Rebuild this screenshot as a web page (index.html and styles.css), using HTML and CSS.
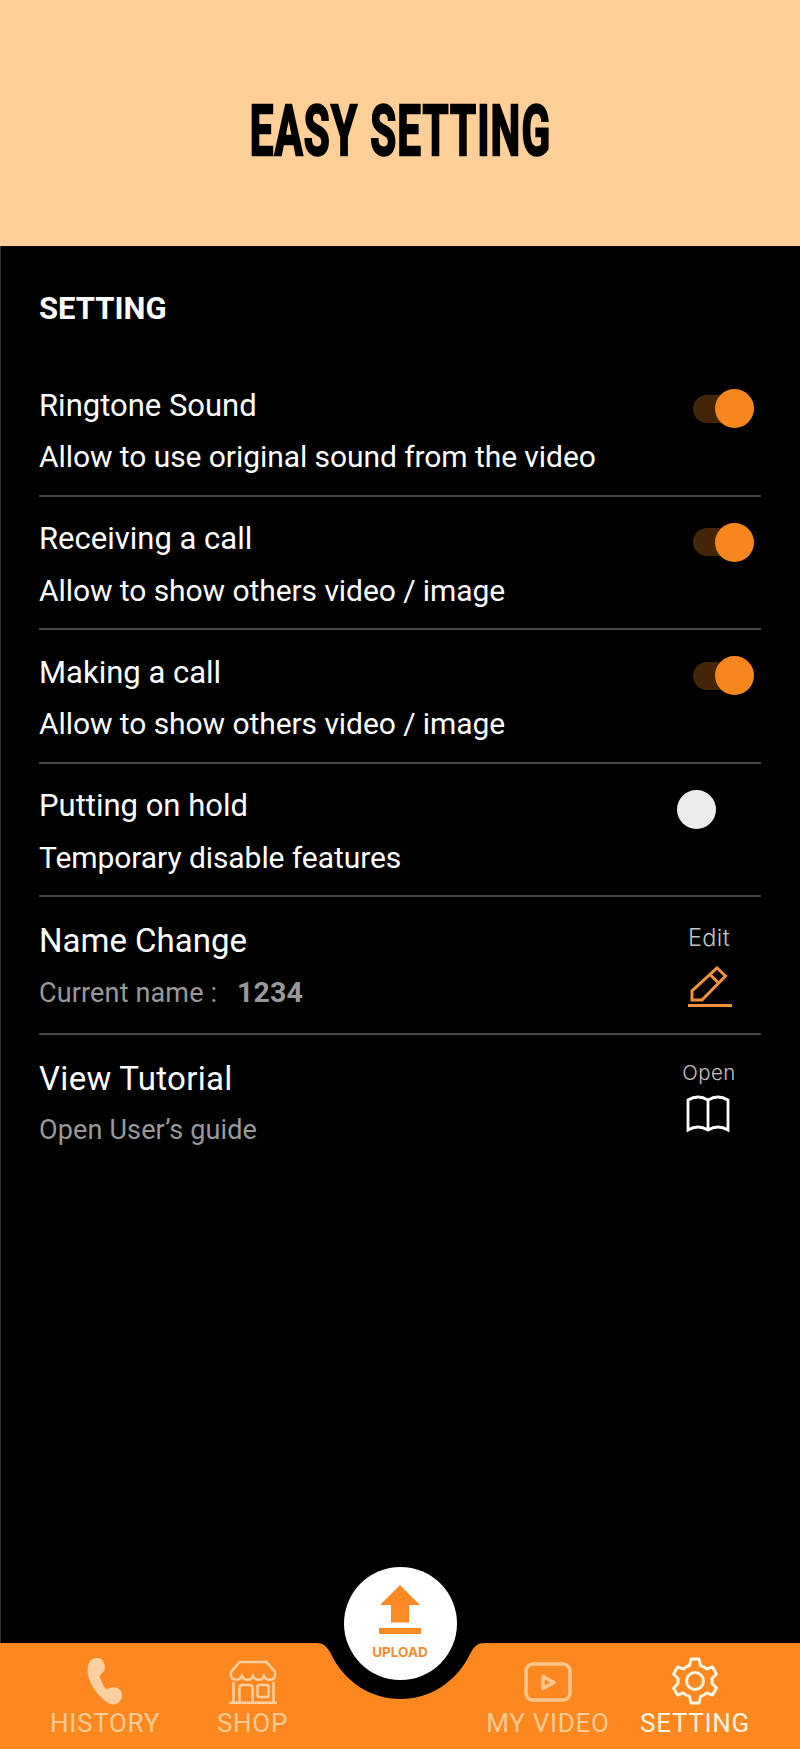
FILE: index.html
```html
<!DOCTYPE html>
<html lang="en">
<head>
    <meta charset="UTF-8">
    <meta name="viewport" content="width=device-width, initial-scale=1.0">
    <title>Easy Setting</title>
    <link rel="stylesheet" href="styles.css">
</head>
<body>
    <header class="banner">
        <h1>EASY SETTING</h1>
    </header>

    <main class="settings">
        <h2>SETTING</h2>

        <section class="row">
            <div class="row-text">
                <p class="title">Ringtone Sound</p>
                <p class="desc">Allow to use original sound from the video</p>
            </div>
            <div class="toggle on"></div>
        </section>

        <section class="row">
            <div class="row-text">
                <p class="title">Receiving a call</p>
                <p class="desc">Allow to show others video / image</p>
            </div>
            <div class="toggle on"></div>
        </section>

        <section class="row">
            <div class="row-text">
                <p class="title">Making a call</p>
                <p class="desc">Allow to show others video / image</p>
            </div>
            <div class="toggle on"></div>
        </section>

        <section class="row">
            <div class="row-text">
                <p class="title">Putting on hold</p>
                <p class="desc">Temporary disable features</p>
            </div>
            <div class="toggle"></div>
        </section>

        <section class="row name-row">
            <div class="row-text">
                <p class="title big">Name Change</p>
                <p class="desc muted">Current name : <strong>1234</strong></p>
            </div>
            <div class="action edit">
                <span>Edit</span>
                <svg width="44" height="44" viewBox="0 0 44 44" fill="none" stroke="#f4923a" stroke-width="3">
                    <path d="M4 34V25L29 2L37.5 10L14 34ZM22 8.500L30 16.500"/>
                    <path d="M0 39.500H44" stroke-width="3"/>
                </svg>
            </div>
        </section>

        <section class="row tutorial-row">
            <div class="row-text">
                <p class="title big">View Tutorial</p>
                <p class="desc muted">Open User’s guide</p>
            </div>
            <div class="action open">
                <span>Open</span>
                <svg width="44" height="38" viewBox="0 0 44 38" fill="none" stroke="#fff" stroke-width="2.800">
                    <path d="M22 5Q12-1 2 5V35Q12 29 22 35Q32 29 42 35V5Q32-1 22 5V35"/>
                </svg>
            </div>
        </section>
    </main>

    <nav class="tabbar">
        <svg class="tabbar-bg" width="800" height="106" viewBox="0 0 800 106">
            <path fill="#fc881f" d="M0 0H316C323 0 327 3 331 11C344 38 370 56 400.500 56C431 56 457 38 470 11C474 3 478 0 485 0H800V106H0Z"/>
        </svg>
        <a class="tab history">
            <svg width="36" height="48" viewBox="0 0 36 48" fill="#fbd0a0">
                <path d="M1 9C2 2 8 0 13 1.500C18 4 20 12 15.500 16C12.500 18 12 19 14 23C16 28 17 30 20 32.500C24 30 29 29 33 33C37 37 35 45 29 47C24 49 17 44 12 38C4 29-1 18 1 9Z"/>
            </svg>
            <span>HISTORY</span>
        </a>
        <a class="tab shop">
            <svg width="48" height="44" viewBox="0 0 48 44" fill="none" stroke="#fbd0a0" stroke-width="2.500">
                <path d="M10.500 2H37.500L46 12V15C46 21 37 21 35 16C33 21 26 21 24 16C22 21 15 21 13 16C11 21 2 21 2 15V12Z"/>
                <path d="M4.500 22V43M44.500 22V43M0 42.700H48M10.500 43V28Q10.500 25 13.500 25H20.500Q23.500 25 23.500 28V43"/>
                <rect x="28.500" y="25" width="11" height="12" rx="1.500"/>
            </svg>
            <span>SHOP</span>
        </a>
        <a class="tab video">
            <svg width="48" height="40" viewBox="0 0 48 40" fill="none" stroke="#fcc88f" stroke-width="3.500">
                <rect x="2" y="2" width="44" height="36" rx="7"/>
                <path d="M19 14.500L30 20.500L19 26.500Z" stroke-linejoin="round"/>
            </svg>
            <span>MY VIDEO</span>
        </a>
        <a class="tab setting active">
            <svg width="46" height="48" viewBox="0 0 46 48" fill="none" stroke="#fff6e4" stroke-width="3" stroke-linejoin="round">
                <path d="M19 2H27L28.500 8.500Q32 9.500 34.500 12L40.500 10L44.500 17L40 21.500V26.500L44.500 31L40.500 38L34.500 36Q32 38.500 28.500 39.500L27 46H19L17.500 39.500Q14 38.500 11.500 36L5.500 38L1.500 31L6 26.500V21.500L1.500 17L5.500 10L11.500 12Q14 9.500 17.500 8.500Z"/>
                <circle cx="23" cy="24" r="8.500"/>
            </svg>
            <span>SETTING</span>
        </a>
        <a class="upload">
            <svg width="42" height="50" viewBox="0 0 42 50" fill="#fa8a24">
                <path d="M21 0L41 20H30V37.500H12V20H1Z"/>
                <path d="M0 43H42V49H0Z"/>
            </svg>
            <span>UPLOAD</span>
        </a>
    </nav>
</body>
</html>
```

FILE: styles.css
```css
:root {
    --orange: #f7861f;
    --peach: #ffcf97;
    --line: #464646;
}

* {
    margin: 0;
    padding: 0;
    box-sizing: border-box;
}

body {
    width: 800px;
    height: 1749px;
    background-color: #000;
    color: #fff;
    font-family: Roboto, sans-serif;
    display: flex;
    flex-direction: column;
    overflow: hidden;
}

.banner {
    height: 245.5px;
    background-color: var(--peach);
    display: flex;
    justify-content: center;
    padding-top: 88.5px;
}

/* Tall condensed display lettering */
h1 {
    color: #000;
    font-size: 70px;
    line-height: 84px;
    font-weight: 700;
    letter-spacing: 1.8px;
    word-spacing: 1px;
    white-space: nowrap;
    transform: scaleX(0.602);
    -webkit-text-stroke: 2.4px #000;
}

.settings {
    flex: 1;
    padding: 0 39px 0 38px;
    border-left: 1px solid #333;
}

h2 {
    font-size: 31px;
    line-height: 40px;
    font-weight: 700;
    padding-top: 43.5px;
    height: 117.5px;
}

.row {
    height: 133.5px;
    padding-top: 16.5px;
    border-bottom: 2px solid var(--line);
    display: flex;
    justify-content: space-between;
}

.title,
.desc {
    font-size: 30px;
    line-height: 51.5px;
    white-space: nowrap;
}

.title {
    font-size: 31px;
}

.desc {
    letter-spacing: -0.07px;
}

.title.big {
    font-size: 33px;
}

.desc.muted {
    font-size: 27px;
    line-height: 53px;
    letter-spacing: 0.15px;
    color: #999;
}

.muted strong {
    margin-left: 13px;
    font-size: 28.5px;
}

.name-row {
    height: 138px;
    padding-top: 17.5px;
}

.tutorial-row {
    border-bottom: none;
    padding-top: 17.5px;
}

.tutorial-row .title {
    letter-spacing: 0.3px;
}

.toggle {
    width: 84px;
    height: 39px;
    margin-top: 9.5px;
    display: flex;
    align-items: center;
}

.toggle::before {
    content: '';
    width: 39px;
    height: 39px;
    border-radius: 50%;
    background-color: #ececec;
}

.toggle.on {
    width: 68px;
}

.toggle.on::before {
    width: 42px;
    height: 28px;
    border-radius: 14px 0 0 14px;
    background-color: #43260a;
}

.toggle.on::after {
    content: '';
    width: 39px;
    height: 39px;
    margin-left: -20px;
    border-radius: 50%;
    background-color: var(--orange);
}

.action {
    width: 104px;
    display: flex;
    flex-direction: column;
    align-items: center;
    color: #c4c4c4;
    font-family: Inter, sans-serif;
    line-height: 28px;
    font-weight: 300;
}

.edit {
    padding-top: 9px;
    font-size: 23.5px;
    letter-spacing: 0.4px;
}

.edit svg {
    margin: 14px 0 0 2px;
}

.open {
    padding-top: 6px;
    font-size: 20.5px;
    letter-spacing: 0.4px;
}

.open svg {
    margin: 8px 2px 0 0;
}

.tabbar {
    position: relative;
    height: 106px;
    display: grid;
    grid-template-columns: 210px 85px 198px 110px 184px;
}

/* Bar shape with the notch for the upload button */
.tabbar-bg {
    position: absolute;
    left: 0;
    top: 0;
}

.tab {
    position: relative;
    display: flex;
    flex-direction: column;
    align-items: center;
    justify-content: flex-end;
    color: #fbcb95;
    font-size: 26px;
    line-height: 30px;
    letter-spacing: 0.7px;
    white-space: nowrap;
    padding-bottom: 11px;
}

.history svg,
.setting svg {
    margin-bottom: 3px;
}

.shop svg {
    margin-bottom: 4.5px;
}

.video {
    grid-column: 4;
}

.video svg {
    margin-bottom: 6px;
}

.active {
    color: #fff6e4;
}

.upload {
    position: absolute;
    left: 344px;
    top: -76px;
    width: 113px;
    height: 113px;
    border-radius: 50%;
    background-color: #fff;
    color: #ef8e30;
    display: flex;
    flex-direction: column;
    align-items: center;
    padding: 18px 1px 0 0;
    font-family: Inter, sans-serif;
    font-size: 13.5px;
    line-height: 16px;
    font-weight: 700;
}

.upload span {
    margin-top: 9px;
}
```
